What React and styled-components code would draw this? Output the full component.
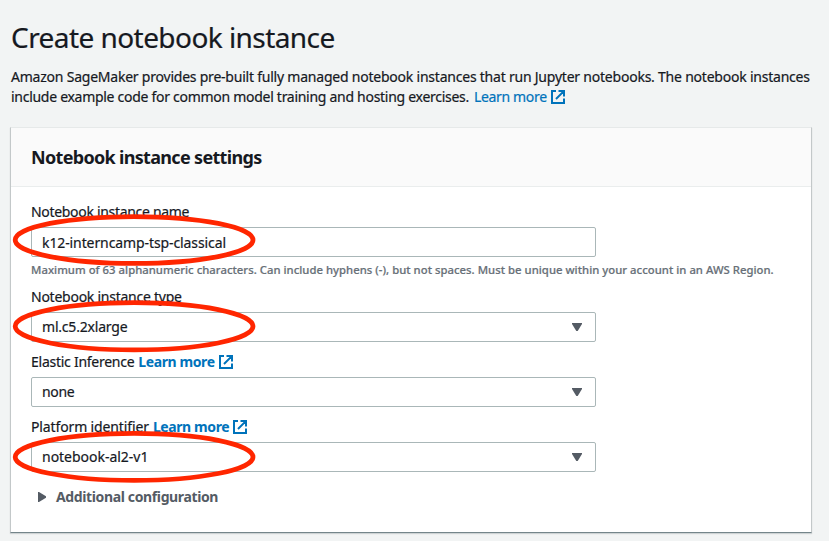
import React from 'react';
import styled, { createGlobalStyle } from 'styled-components';

const GlobalStyle = createGlobalStyle`
  * { box-sizing: border-box; }
  body {
    margin: 0;
    background: #f2f4f4;
    color: #16191f;
    font: 400 14px/20px "Noto Sans", "Open Sans", sans-serif;
    -webkit-text-stroke: 0.2px currentColor;
  }
`;

const Page = styled.main`
  position: relative;
  height: 541px;
  padding: 17px 17px 0 11px;
  overflow: hidden;
`;

const Title = styled.h1`
  margin: 0;
  font-size: 28px;
  font-weight: 400;
  line-height: 40px;
  letter-spacing: -0.56px;
`;

const Description = styled.p`
  margin: 10px 0 20px;
`;

const Line = styled.span`
  display: flex;
  align-items: center;
  height: 20px;
  white-space: nowrap;
  letter-spacing: ${(p) => p.$tracking}px;
`;

const Link = styled.a`
  display: inline-flex;
  align-items: center;
  gap: 4px;
  margin-left: ${(p) => (p.$bold ? 4 : 5)}px;
  color: #0073bb;
  font-weight: ${(p) => (p.$bold ? 700 : 400)};
  letter-spacing: ${(p) => (p.$bold ? -0.4 : -0.34)}px;
  text-decoration: none;
  -webkit-text-stroke-width: ${(p) => (p.$bold ? 0 : 0.2)}px;
`;

const Panel = styled.section`
  width: 802px;
  height: 406px;
  margin-left: -1px;
  background: #fff;
  border: 1px solid #c3c8c9;
  border-top-color: #e6e9e9;
  border-bottom-color: #74858a;
  box-shadow: 0 1px 1px rgba(0, 28, 36, 0.15);
`;

const PanelHeader = styled.header`
  height: 59px;
  padding: 14px 20px;
  background: #fafafa;
  border-bottom: 1px solid #eaeded;
`;

const PanelTitle = styled.h2`
  margin: 0;
  font-size: 18px;
  font-weight: 700;
  line-height: 30px;
  letter-spacing: -0.68px;
  -webkit-text-stroke-width: 0;
`;

const Form = styled.div`
  display: flex;
  flex-direction: column;
  gap: 10px;
  padding: 15px 20px 0;
`;

const Field = styled.div`
  display: grid;
  row-gap: 5px;
`;

const Control = styled.div`
  display: flex;
  align-items: center;
  justify-content: space-between;
  width: 565px;
  height: 30px;
  padding: ${(p) => (p.$select ? 0 : 2)}px 13px 0 10px;
  border: 1px solid #aab7b8;
  border-radius: 2px;
  background: #fff;
  letter-spacing: ${(p) => p.$tracking}px;
`;

const Hint = styled.div`
  height: 15px;
  color: #687078;
  font-size: 11.3px;
  font-weight: 500;
  line-height: 16px;
  letter-spacing: 0.028px;
  white-space: nowrap;
`;

const Expander = styled.div`
  display: flex;
  align-items: center;
  gap: 10px;
  height: 20px;
  margin-top: 5px;
  padding-left: 7px;
  color: #545b64;
  font-weight: 700;
  letter-spacing: -0.37px;
  -webkit-text-stroke-width: 0;
`;

const Marks = styled.svg`
  position: absolute;
  inset: 0;
  pointer-events: none;
`;

const ExternalIcon = () => (
  <svg width="14" height="14" viewBox="0 0 14 14" fill="none" stroke="currentColor" strokeWidth="2">
    <path d="M5 1H1v12h12V8.5M7.5 1H13v5.5M12.6 1.4 5 9" />
  </svg>
);

const DownArrow = () => (
  <svg width="10" height="8" viewBox="0 0 10 8">
    <path d="M0 0h10v1L5.7 8H4.3L0 1z" fill="#545b64" />
  </svg>
);

const RightArrow = () => (
  <svg width="8" height="10" viewBox="0 0 8 10">
    <path d="M0 0h1l7 4.3v1.4L1 10H0z" fill="#545b64" />
  </svg>
);

const LearnMore = ({ bold }) => (
  <Link $bold={bold}>
    Learn more
    <ExternalIcon />
  </Link>
);

const FIELDS = [
  {
    label: 'Notebook instance name',
    labelTracking: -0.31,
    value: 'k12-interncamp-tsp-classical',
    tracking: -0.1,
    hint: 'Maximum of 63 alphanumeric characters. Can include hyphens (-), but not spaces. Must be unique within your account in an AWS Region.',
  },
  { label: 'Notebook instance type', labelTracking: -0.25, value: 'ml.c5.2xlarge', tracking: -0.2, select: true },
  { label: 'Elastic Inference', labelTracking: -0.26, value: 'none', tracking: -0.3, select: true, link: true },
  { label: 'Platform identifier', labelTracking: -0.13, value: 'notebook-al2-v1', tracking: -0.02, select: true, link: true },
];

export default function App() {
  return (
    <Page>
      <GlobalStyle />
      <Title>Create notebook instance</Title>
      <Description>
        <Line $tracking={-0.222}>
          Amazon SageMaker provides pre-built fully managed notebook instances that run Jupyter notebooks. The notebook instances
        </Line>
        <Line $tracking={-0.283}>
          include example code for common model training and hosting exercises.
          <LearnMore />
        </Line>
      </Description>
      <Panel>
        <PanelHeader>
          <PanelTitle>Notebook instance settings</PanelTitle>
        </PanelHeader>
        <Form>
          {FIELDS.map((f) => (
            <Field key={f.label}>
              <Line $tracking={f.labelTracking}>
                {f.label}
                {f.link && <LearnMore bold />}
              </Line>
              <Control $tracking={f.tracking} $select={f.select}>
                {f.value}
                {f.select && <DownArrow />}
              </Control>
              {f.hint && <Hint>{f.hint}</Hint>}
            </Field>
          ))}
          <Expander>
            <RightArrow />
            Additional configuration
          </Expander>
        </Form>
      </Panel>
      <Marks width="829" height="541" fill="none" stroke="#ff2600" strokeWidth="4.8">
        <ellipse cx="134.1" cy="240" rx="118.9" ry="23.4" />
        <ellipse cx="134.1" cy="326.3" rx="118.9" ry="23.6" />
        <ellipse cx="134.1" cy="456.9" rx="118.9" ry="23.5" />
      </Marks>
    </Page>
  );
}
